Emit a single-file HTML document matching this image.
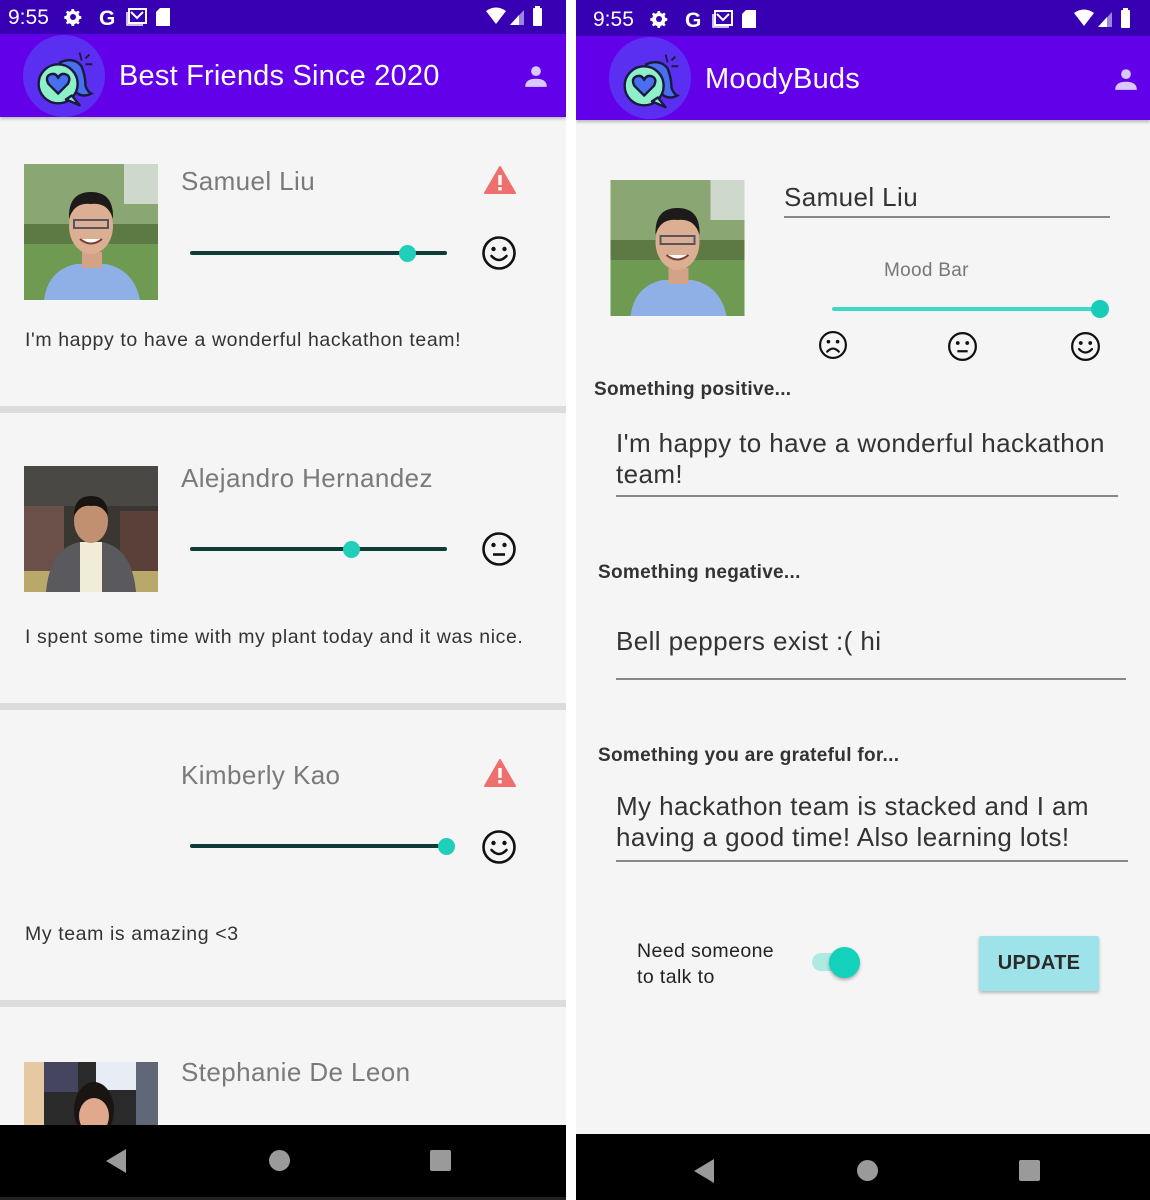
<!DOCTYPE html>
<html><head><meta charset="utf-8">
<style>
*{margin:0;padding:0;box-sizing:border-box}
body{width:1150px;height:1200px;position:relative;background:#fff;font-family:"Liberation Sans",sans-serif;overflow:hidden}
.p{position:absolute;top:0;height:1200px;background:#f5f5f5;overflow:hidden}
.a{position:absolute}
.t{position:absolute;white-space:nowrap}
.sb{position:absolute;left:0;right:0;top:0;background:#3700b3;color:#fff}
.ab{position:absolute;left:0;right:0;background:#6200ea;box-shadow:0 2px 3px rgba(0,0,0,.25)}
.div{position:absolute;left:0;right:0;height:7px;background:#dcdcdc}
.track{position:absolute;height:4px;background:#0d3b38;border-radius:2px}
.thumb{position:absolute;width:17px;height:17px;border-radius:50%;background:#1fcfb9}
.name{font-size:26px;color:#7a7a7a;letter-spacing:.4px}
.msg{font-size:19.5px;color:#333;letter-spacing:.6px}
.nav{position:absolute;left:0;right:0;background:#000}
.lbl{font-size:19px;color:#333;font-weight:bold;letter-spacing:.3px}
.big{font-size:26px;color:#333;line-height:31px;letter-spacing:.4px}
.ul{position:absolute;height:2px;background:#888}
</style></head><body>

<svg width="0" height="0" style="position:absolute">
<defs>
<symbol id="happy" viewBox="0 0 36 36"><circle cx="18" cy="18" r="15.5" fill="none" stroke="#111" stroke-width="2.6"/><circle cx="12.5" cy="14" r="2.2" fill="#111"/><circle cx="23.5" cy="14" r="2.2" fill="#111"/><path d="M10.5 21 Q18 29 25.5 21" fill="none" stroke="#111" stroke-width="2.6" stroke-linecap="round"/></symbol>
<symbol id="neutral" viewBox="0 0 36 36"><circle cx="18" cy="18" r="15.5" fill="none" stroke="#111" stroke-width="2.6"/><circle cx="12.5" cy="14" r="2.2" fill="#111"/><circle cx="23.5" cy="14" r="2.2" fill="#111"/><path d="M12 23.5 H24" stroke="#111" stroke-width="2.6"/></symbol>
<symbol id="sad" viewBox="0 0 36 36"><circle cx="18" cy="18" r="15.5" fill="none" stroke="#111" stroke-width="2.6"/><circle cx="12.5" cy="14" r="2.2" fill="#111"/><circle cx="23.5" cy="14" r="2.2" fill="#111"/><path d="M11 26 Q18 18.5 25 26" fill="none" stroke="#111" stroke-width="2.6" stroke-linecap="round"/></symbol>
<symbol id="warn" viewBox="0 0 32 28"><path d="M16 1 L31 27 H1 Z" fill="#ef6f6f" stroke="#ef6f6f" stroke-width="2" stroke-linejoin="round"/><rect x="14.3" y="9" width="3.4" height="10" fill="#fff"/><rect x="14.3" y="21" width="3.4" height="3.4" fill="#fff"/></symbol>
<symbol id="logo" viewBox="0 0 84 84"><circle cx="42" cy="42" r="42" fill="#5b2ff2"/><path d="M38 28 Q52 22 60 32 Q64 42 64 52 Q66 58 70 60 Q62 64 56 60 L44 50 Z" fill="#4a6ef0" stroke="#1a1a40" stroke-width="2.5"/><path d="M58 18 L60 26 M64 24 L68 20 M64 30 L71 30" stroke="#1a1a40" stroke-width="2"/><circle cx="36" cy="50" r="20" fill="#8ef0c8" stroke="#1a1a40" stroke-width="2.5"/><path d="M44 66 L58 72 L50 62 Z" fill="#8ef0c8" stroke="#1a1a40" stroke-width="2.5" stroke-linejoin="round"/><path d="M36 60 L26 50 Q22 42 29 40 Q34 39 36 44 Q38 39 43 40 Q50 42 46 50 Z" fill="#4a6ef0" stroke="#1a1a40" stroke-width="2.5" stroke-linejoin="round"/></symbol>
<symbol id="user" viewBox="0 0 24 24"><circle cx="12" cy="7.5" r="4.5" fill="#d8c8ff"/><path d="M2 22 Q2 14.5 12 14.5 Q22 14.5 22 22 Z" fill="#d8c8ff"/></symbol>
<symbol id="status" viewBox="0 0 140 24"><path d="M22 4 l2 0 .5 2 2 .8 1.6-1.2 1.6 1.6-1.2 1.6.8 2 2 .5v2.4l-2 .5-.8 2 1.2 1.6-1.6 1.6-1.6-1.2-2 .8-.5 2h-2.4l-.5-2-2-.8-1.6 1.2-1.6-1.6 1.2-1.6-.8-2-2-.5v-2.4l2-.5.8-2-1.2-1.6 1.6-1.6 1.6 1.2 2-.8.5-2z" fill="#fff"/><circle cx="23" cy="12" r="3" fill="#3700b3"/><text x="49" y="20" font-family="Liberation Sans" font-weight="bold" font-size="21" fill="#fff">G</text><rect x="79" y="4" width="17" height="14" fill="none" stroke="#fff" stroke-width="2"/><path d="M81 7 l6 6 6-6" fill="none" stroke="#fff" stroke-width="2"/><path d="M77 7 v13 h16" fill="none" stroke="#fff" stroke-width="1.5"/><path d="M110 3 h10 v18 h-14 v-14 z" fill="#fff"/></symbol>
<symbol id="status2" viewBox="0 0 70 24"><path d="M2 6 Q12 -1 22 6 L12 19 Z" fill="#fff"/><path d="M26 20 L40 5 V20 Z" fill="#9a86e0"/><path d="M26 20 L35 10 V20 Z" fill="#fff"/><rect x="49" y="3" width="9" height="18" rx="1" fill="#fff"/><rect x="51" y="1" width="5" height="3" fill="#fff"/></symbol>
<symbol id="sam" viewBox="0 0 134 136"><rect width="134" height="136" fill="#5d7a44"/><rect x="0" y="0" width="134" height="60" fill="#8aa672"/><rect x="0" y="80" width="134" height="56" fill="#6f9a52"/><rect x="100" y="0" width="34" height="40" fill="#cfd8cc"/><path d="M20 136 Q24 106 52 100 L82 100 Q110 106 116 136 Z" fill="#8fb0e6"/><rect x="58" y="88" width="20" height="16" fill="#d4a286"/><ellipse cx="67" cy="62" rx="22" ry="28" fill="#dcae92"/><path d="M45 55 Q44 28 67 28 Q90 28 89 55 Q84 38 67 40 Q50 38 45 55Z" fill="#1d1a1a"/><rect x="50" y="56" width="34" height="8" fill="none" stroke="#556" stroke-width="2"/><path d="M56 75 Q67 84 78 75" fill="#fff" stroke="#7a3b30" stroke-width="2"/></symbol>
<symbol id="ale" viewBox="0 0 134 126"><rect width="134" height="126" fill="#3a3632"/><rect y="0" width="134" height="40" fill="#4a4844"/><rect x="0" y="40" width="40" height="86" fill="#6a5048"/><rect x="96" y="45" width="38" height="81" fill="#5a4038"/><rect y="105" width="134" height="21" fill="#b8a86a"/><path d="M22 126 Q26 82 56 76 L78 76 Q108 82 112 126 Z" fill="#5a5a5e"/><rect x="56" y="76" width="22" height="50" fill="#f0ecd8"/><ellipse cx="67" cy="55" rx="17" ry="22" fill="#c09070"/><path d="M50 50 Q50 30 67 30 Q84 30 84 50 Q78 38 67 40 Q56 38 50 50Z" fill="#1a1410"/></symbol>
<symbol id="ste" viewBox="0 0 134 64"><rect width="134" height="64" fill="#2a2a2a"/><rect width="20" height="64" fill="#e6c8a2"/><rect x="20" width="34" height="30" fill="#454560"/><rect x="72" y="0" width="40" height="28" fill="#e8ecf4"/><rect x="112" y="0" width="22" height="64" fill="#606878"/><ellipse cx="70" cy="48" rx="20" ry="28" fill="#1a1412"/><ellipse cx="70" cy="54" rx="15" ry="18" fill="#e0a88c"/></symbol>
</defs></svg>

<!-- LEFT PANEL -->
<div class="p" style="left:0;width:566px">
  <div class="sb" style="height:34px">
    <div class="t" style="left:8px;top:6px;font-size:21px">9:55</div>
    <svg class="a" style="left:50px;top:5px" width="140" height="24"><use href="#status"/></svg>
    <svg class="a" style="left:484px;top:5px" width="70" height="24"><use href="#status2"/></svg>
  </div>
  <div class="ab" style="top:34px;height:83px">
    <svg class="a" style="left:23px;top:1px" width="82" height="82"><use href="#logo"/></svg>
    <div class="t" style="left:119px;top:26px;font-size:29px;color:#fff;letter-spacing:.2px">Best Friends Since 2020</div>
    <svg class="a" style="left:523px;top:29px" width="26" height="26"><use href="#user"/></svg>
  </div>

  <svg class="a" style="left:24px;top:164px" width="134" height="136"><use href="#sam"/></svg>
  <div class="t name" style="left:181px;top:166px">Samuel Liu</div>
  <svg class="a" style="left:484px;top:166px" width="32" height="28"><use href="#warn"/></svg>
  <div class="track" style="left:190px;width:257px;top:251px"></div>
  <div class="thumb" style="left:399px;top:245px"></div>
  <svg class="a" style="left:481px;top:235px" width="36" height="36"><use href="#happy"/></svg>
  <div class="t msg" style="left:25px;top:329px">I'm happy to have a wonderful hackathon team!</div>
  <div class="div" style="top:406px"></div>

  <svg class="a" style="left:24px;top:466px" width="134" height="126"><use href="#ale"/></svg>
  <div class="t name" style="left:181px;top:463px">Alejandro Hernandez</div>
  <div class="track" style="left:190px;width:257px;top:547px"></div>
  <div class="thumb" style="left:343px;top:541px"></div>
  <svg class="a" style="left:481px;top:531px" width="36" height="36"><use href="#neutral"/></svg>
  <div class="t msg" style="left:25px;top:626px">I spent some time with my plant today and it was nice.</div>
  <div class="div" style="top:703px"></div>

  <div class="t name" style="left:181px;top:760px">Kimberly Kao</div>
  <svg class="a" style="left:484px;top:759px" width="32" height="28"><use href="#warn"/></svg>
  <div class="track" style="left:190px;width:257px;top:844px"></div>
  <div class="thumb" style="left:438px;top:838px"></div>
  <svg class="a" style="left:481px;top:829px" width="36" height="36"><use href="#happy"/></svg>
  <div class="t msg" style="left:25px;top:923px">My team is amazing &lt;3</div>
  <div class="div" style="top:1000px"></div>

  <svg class="a" style="left:24px;top:1062px" width="134" height="64"><use href="#ste"/></svg>
  <div class="t name" style="left:181px;top:1057px">Stephanie De Leon</div>

  <div class="nav" style="top:1125px;height:72px">
    <svg class="a" style="left:104px;top:23px" width="24" height="26"><path d="M22 1 V25 L2 13 Z" fill="#9a9a9a"/></svg>
    <div class="a" style="left:269px;top:25px;width:21px;height:21px;border-radius:50%;background:#9a9a9a"></div>
    <div class="a" style="left:430px;top:25px;width:21px;height:21px;border-radius:2px;background:#9a9a9a"></div>
  </div>
  <div class="a" style="left:0;right:0;top:1197px;height:3px;background:#222"></div>
</div>

<!-- RIGHT PANEL -->
<div class="p" style="left:576px;width:574px">
  <div class="sb" style="height:36px">
    <div class="t" style="left:17px;top:8px;font-size:21px">9:55</div>
    <svg class="a" style="left:60px;top:7px" width="140" height="24"><use href="#status"/></svg>
    <svg class="a" style="left:496px;top:7px" width="70" height="24"><use href="#status2"/></svg>
  </div>
  <div class="ab" style="top:36px;height:84px">
    <svg class="a" style="left:33px;top:1px" width="82" height="82"><use href="#logo"/></svg>
    <div class="t" style="left:129px;top:27px;font-size:29px;color:#fff;letter-spacing:.2px">MoodyBuds</div>
    <svg class="a" style="left:537px;top:30px" width="26" height="26"><use href="#user"/></svg>
  </div>

  <svg class="a" style="left:34px;top:180px" width="135" height="136"><use href="#sam"/></svg>
  <div class="t big" style="left:208px;top:182px">Samuel Liu</div>
  <div class="ul" style="left:208px;width:326px;top:216px"></div>
  <div class="t" style="left:308px;top:260px;font-size:19px;color:#777;letter-spacing:.3px">Mood Bar</div>
  <div class="a" style="left:256px;width:270px;top:307px;height:4px;background:#3fd8c6;border-radius:2px"></div>
  <div class="a" style="left:515px;top:300px;width:18px;height:18px;border-radius:50%;background:#16cdb8"></div>
  <svg class="a" style="left:242px;top:330px" width="30" height="30"><use href="#sad"/></svg>
  <svg class="a" style="left:371px;top:331px" width="31" height="31"><use href="#neutral"/></svg>
  <svg class="a" style="left:494px;top:331px" width="31" height="31"><use href="#happy"/></svg>

  <div class="t lbl" style="left:18px;top:379px">Something positive...</div>
  <div class="a big" style="left:40px;top:428px;width:530px">I'm happy to have a wonderful hackathon<br>team!</div>
  <div class="ul" style="left:40px;width:502px;top:495px"></div>

  <div class="t lbl" style="left:22px;top:562px">Something negative...</div>
  <div class="t big" style="left:40px;top:626px">Bell peppers exist :( hi</div>
  <div class="ul" style="left:40px;width:510px;top:678px"></div>

  <div class="t lbl" style="left:22px;top:745px">Something you are grateful for...</div>
  <div class="a big" style="left:40px;top:791px;width:534px">My hackathon team is stacked and I am<br>having a good time! Also learning lots!</div>
  <div class="ul" style="left:40px;width:512px;top:860px"></div>

  <div class="a" style="left:61px;top:938px;font-size:19.5px;color:#222;line-height:26px;letter-spacing:.4px">Need someone<br>to talk to</div>
  <div class="a" style="left:236px;top:953px;width:40px;height:18px;border-radius:9px;background:#aeeae2"></div>
  <div class="a" style="left:253px;top:947px;width:31px;height:31px;border-radius:50%;background:#14d1bb;box-shadow:0 2px 3px rgba(0,0,0,.3)"></div>
  <div class="a" style="left:403px;top:936px;width:120px;height:55px;background:#9fe3ea;box-shadow:0 2px 3px rgba(0,0,0,.25);border-radius:2px;font-size:20px;font-weight:bold;color:#2a2a2a;text-align:center;line-height:55px;letter-spacing:.3px">UPDATE</div>

  <div class="nav" style="top:1134px;height:66px">
    <svg class="a" style="left:116px;top:24px" width="24" height="26"><path d="M22 1 V25 L2 13 Z" fill="#9a9a9a"/></svg>
    <div class="a" style="left:281px;top:26px;width:21px;height:21px;border-radius:50%;background:#9a9a9a"></div>
    <div class="a" style="left:443px;top:26px;width:21px;height:21px;border-radius:2px;background:#9a9a9a"></div>
  </div>
</div>
</body></html>
